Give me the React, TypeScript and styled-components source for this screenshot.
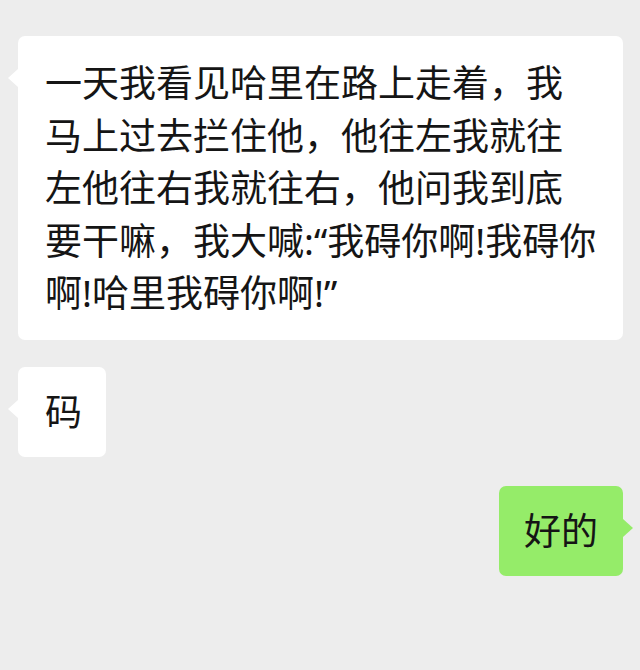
import styled, { createGlobalStyle } from "styled-components";

const GlobalStyle = createGlobalStyle`
  html, body {
    margin: 0;
    padding: 0;
    background: #ededed;
  }
`;

export default function App() {
  return (
    <>
      <GlobalStyle />
      <StyledChat>
        <StyledRow>
          <StyledBubble $wide>
            一天我看见哈里在路上走着，我
            <br />
            马上过去拦住他，他往左我就往
            <br />
            左他往右我就往右，他问我到底
            <br />
            要干嘛，我大喊:“我碍你啊!我碍你
            <br />
            啊!哈里我碍你啊!”
          </StyledBubble>
        </StyledRow>
        <StyledRow>
          <StyledBubble>码</StyledBubble>
        </StyledRow>
        <StyledRow $mine>
          <StyledBubble $mine>好的</StyledBubble>
        </StyledRow>
      </StyledChat>
    </>
  );
}

const StyledChat = styled.div`
  display: flex;
  flex-direction: column;
  gap: 27px;
  padding: 36px 17px 0 18px;
  font-family: "Noto Sans", "Noto Sans CJK SC", sans-serif;
`;

const StyledRow = styled.div<{ $mine?: boolean }>`
  display: flex;
  justify-content: ${(p) => (p.$mine ? "flex-end" : "flex-start")};
  margin-top: ${(p) => (p.$mine ? "2px" : "0")};
`;

const StyledBubble = styled.div<{ $mine?: boolean; $wide?: boolean }>`
  position: relative;
  box-sizing: border-box;
  width: ${(p) => (p.$wide ? "605px" : "auto")};
  padding: ${(p) =>
    p.$wide
      ? "21px 26px 20.5px 27px"
      : p.$mine
        ? "19px 25px 18.5px 25px"
        : "19px 24px 18.5px 27px"};
  border-radius: 7px;
  background: ${(p) => (p.$mine ? "#95ec69" : "#ffffff")};
  color: #151515;
  font-size: 37px;
  line-height: 52.5px;
  white-space: nowrap;

  &::before {
    content: "";
    position: absolute;
    top: 33px;
    ${(p) => (p.$mine ? "right: -10px;" : "left: -10px;")}
    border-top: 9px solid transparent;
    border-bottom: 9px solid transparent;
    ${(p) =>
      p.$mine
        ? "border-left: 10px solid #95ec69;"
        : "border-right: 10px solid #ffffff;"}
  }
`;
